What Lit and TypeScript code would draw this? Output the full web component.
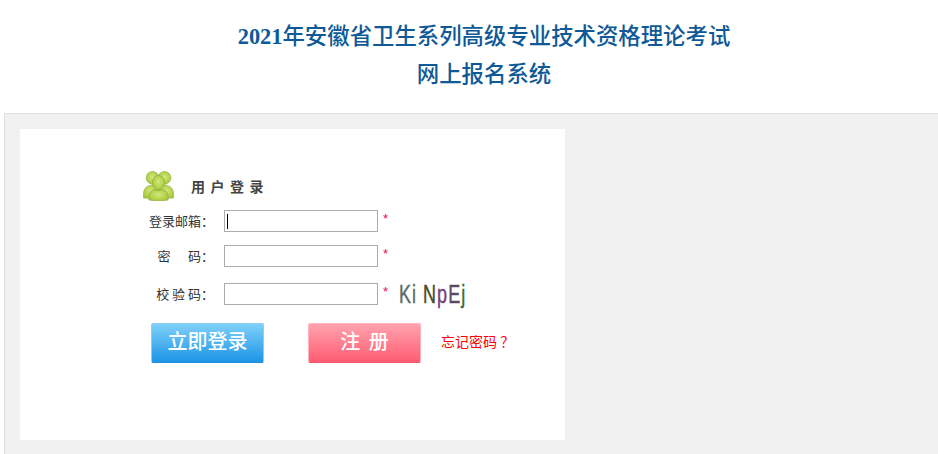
import { LitElement, html, css } from 'lit';
import { customElement } from 'lit/decorators.js';

@customElement('app-root')
export class AppRoot extends LitElement {
  static styles = css`
    :host {
      display: block;
      height: 454px;
      overflow: hidden;
      background: #fff;
      font-family: "Noto Sans CJK SC", sans-serif;
    }
    .title {
      height: 113px;
      box-sizing: border-box;
      padding: 18px 0 0 30px;
      text-align: center;
      font-family: "Liberation Serif", "Noto Sans CJK SC", serif;
      font-size: 22.4px;
      font-weight: 500;
      line-height: 38px;
      color: #0f5a96;
    }
    .title b {
      font-weight: 700;
    }
    .panel {
      margin-left: 4px;
      height: 341px;
      box-sizing: border-box;
      padding: 15px 0 0 15px;
      background: #f1f1f1;
      border-top: 1px solid #dedede;
      border-left: 1px solid #dedede;
    }
    .card {
      width: 545px;
      height: 311px;
      box-sizing: border-box;
      padding: 42px 0 0 122px;
      background: #fff;
    }
    .heading {
      display: flex;
      align-items: center;
      height: 30px;
      margin-left: 1px;
    }
    .heading svg {
      width: 32px;
      height: 30px;
    }
    .heading span {
      margin: 0 0 0 16px;
      font-size: 14px;
      font-weight: 700;
      letter-spacing: 5.5px;
      color: #444;
    }
    .row {
      display: flex;
      align-items: center;
      height: 22px;
    }
    .row.first { margin-top: 9px; }
    .row.second { margin-top: 13px; }
    .row.third { margin-top: 16px; }
    .row label {
      width: 82px;
      box-sizing: border-box;
      padding: 0 10px 2px 0;
      text-align: right;
      font-size: 13px;
      color: #333;
      white-space: pre;
    }
    .box {
      width: 154px;
      height: 22px;
      box-sizing: border-box;
      border: 1px solid #ababab;
      background: #fff;
      padding: 3px 0 0 2px;
    }
    .caret {
      display: block;
      width: 1px;
      height: 15px;
      background: #000;
    }
    .star {
      margin: 0 0 4px 5px;
      width: 6px;
      font-size: 13px;
      line-height: 12px;
      color: #e8104a;
      font-family: "Liberation Sans", sans-serif;
    }
    .captcha {
      display: flex;
      margin-left: 10px;
      width: 68px;
      height: 28px;
      align-items: center;
      gap: 8px;
      font-family: "Liberation Sans", sans-serif;
      font-size: 25px;
      line-height: 28px;
      white-space: nowrap;
      -webkit-text-stroke: 0.4px currentColor;
    }
    .captcha .part {
      display: inline-block;
      letter-spacing: 1.5px;
      transform: scaleX(0.72);
      transform-origin: left center;
    }
    .actions {
      display: flex;
      align-items: center;
      margin: 18px 0 0 9px;
    }
    .btn {
      display: flex;
      align-items: center;
      justify-content: center;
      width: 113px;
      height: 40px;
      box-sizing: border-box;
      padding-bottom: 5px;
      border-radius: 2px;
      font-size: 20px;
      font-weight: 500;
      color: #fff;
    }
    .btn.login {
      background: linear-gradient(#7fd0f9, #1d95e6);
      border: 1px solid #8fcff2;
      border-bottom-color: #1d8fdc;
    }
    .btn.signup {
      margin-left: 44px;
      letter-spacing: 2px;
      text-indent: 2px;
      background: linear-gradient(#ffa3ae, #ff5c72);
      border: 1px solid #ffb5bd;
      border-bottom-color: #f4586d;
    }
    .forgot {
      margin: 0 0 4px 20px;
      font-size: 14px;
      color: #f00;
      white-space: nowrap;
    }
  `;

  private starMark() {
    return html`<span class="star">*</span>`;
  }

  render() {
    return html`
      <div class="title">
        <div><b>2021</b>年安徽省卫生系列高级专业技术资格理论考试</div>
        <div>网上报名系统</div>
      </div>
      <div class="panel">
        <div class="card">
          <div class="heading">
            <svg viewBox="0 0 32 30">
              <defs>
                <radialGradient id="g" cx="0.5" cy="0.45" r="0.6">
                  <stop offset="0" stop-color="#d4e87a" />
                  <stop offset="1" stop-color="#a4c83a" />
                </radialGradient>
              </defs>
              <circle cx="9.5" cy="6.8" r="6.3" fill="url(#g)" stroke="#93b338" stroke-width=".7" />
              <circle cx="21.5" cy="6.8" r="6.3" fill="url(#g)" stroke="#93b338" stroke-width=".7" />
              <path d="M.6 27c-.8-8 1.5-11 6-12.5 3-.8 6-.8 9 0l1 13z" fill="url(#g)" stroke="#93b338" stroke-width=".7" />
              <path d="M30.4 27c.8-8-1.5-11-6-12.5-3-.8-6-.8-9 0l-1 13z" fill="url(#g)" stroke="#93b338" stroke-width=".7" />
              <ellipse cx="15.5" cy="11.5" rx="6" ry="7" fill="url(#g)" stroke="#8cab34" stroke-width=".7" />
              <path d="M6 29c-.8-6 1.5-9 5-10.5 3 1.5 6 1.5 9 0 3.500 1.500 5.800 4.500 5 10.500-6.500.9-12.500.9-19 0z" fill="url(#g)" stroke="#8cab34" stroke-width=".7" />
            </svg>
            <span>用户登录</span>
          </div>
          <div class="row first">
            <label>登录邮箱：</label>
            <div class="box"><i class="caret"></i></div>
            ${this.starMark()}
          </div>
          <div class="row second">
            <label>密      码：</label>
            <div class="box"></div>
            ${this.starMark()}
          </div>
          <div class="row third">
            <label>校 验 码：</label>
            <div class="box"></div>
            ${this.starMark()}
            <div class="captcha">
              <span class="part" style="width:16px;color:#5d6b63">Ki</span>
              <span class="part" style="width:44px">
                <span style="color:#4d4a1e">N</span><span style="color:#74407e">p</span><span style="color:#5a4a5e">E</span><span style="color:#2f6e3c">j</span>
              </span>
            </div>
          </div>
          <div class="actions">
            <div class="btn login">立即登录</div>
            <div class="btn signup">注 册</div>
            <div class="forgot">忘记密码 ？</div>
          </div>
        </div>
      </div>
    `;
  }
}
